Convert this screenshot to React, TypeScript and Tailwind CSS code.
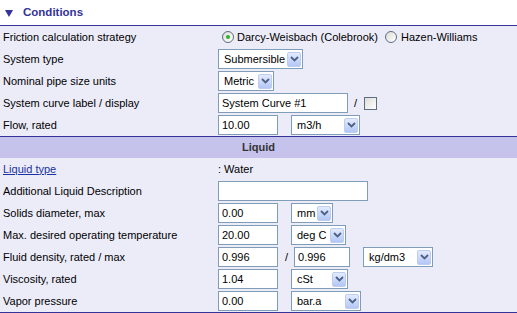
import React from "react";

const Chevron = () => (
  <svg width="9" height="6" viewBox="0 0 9 6">
    <path d="M1 1 L4.5 4.5 L8 1" fill="none" stroke="#4d6185" strokeWidth="1.8" />
  </svg>
);

const Select = ({ value, width }: { value: string; width: string }) => (
  <div className={`flex h-[20px] items-center justify-between border border-[#7f9db9] bg-white ${width}`}>
    <span className="pl-[5px] text-black">{value}</span>
    <div className="mr-[1px] flex h-[15px] w-[14px] items-center justify-center rounded-[2px] border border-[#bdcdf1] bg-gradient-to-b from-[#e3ebfe] to-[#b3c7f5]">
      <Chevron />
    </div>
  </div>
);

const Input = ({ value = "", width }: { value?: string; width: string }) => (
  <div className={`flex h-[20px] items-center border border-[#7f9db9] bg-white pl-[3px] text-black ${width}`}>
    {value}
  </div>
);

const Radio = ({ checked }: { checked?: boolean }) => (
  <div className="flex h-[12px] w-[12px] items-center justify-center rounded-full border border-[#5f6d80] bg-gradient-to-br from-[#dcdcd7] to-white">
    {checked && <div className="h-[4px] w-[4px] rounded-full bg-[#2fb02f]" />}
  </div>
);

const Row = ({ label, children }: { label: React.ReactNode; children?: React.ReactNode }) => (
  <div className="flex h-[22px] items-center">
    <div className="w-[218px] pl-[3px] text-black">{label}</div>
    <div className="flex items-center">{children}</div>
  </div>
);

export default function App() {
  return (
    <div className="h-[313px] w-[517px] overflow-hidden bg-white text-[11px] leading-none" style={{ fontFamily: '"Liberation Sans", Arial, sans-serif' }}>
      {/* Header */}
      <div className="flex h-[25px] items-center pl-[5px]">
        <svg width="8" height="7" viewBox="0 0 8 7" className="mt-[1px]">
          <path d="M0 0 H8 L4 7 Z" fill="#33339a" />
        </svg>
        <span className="ml-[10px] text-[11.5px] font-bold text-[#33339a]">Conditions</span>
      </div>

      <div className="border-t border-b-2 border-[#333399] bg-[#ececf9]">
        <Row label="Friction calculation strategy">
          <div className="ml-[4px] flex items-center">
            <Radio checked />
            <span className="ml-[3px]">Darcy-Weisbach (Colebrook)</span>
            <div className="ml-[7px]">
              <Radio />
            </div>
            <span className="ml-[4px]">Hazen-Williams</span>
          </div>
        </Row>
        <Row label="System type">
          <Select value="Submersible" width="w-[85px]" />
        </Row>
        <Row label="Nominal pipe size units">
          <Select value="Metric" width="w-[56px]" />
        </Row>
        <Row label="System curve label / display">
          <Input value="System Curve #1" width="w-[130px]" />
          <span className="ml-[6px]">/</span>
          <div className="ml-[7px] h-[13px] w-[13px] border border-[#5f6d80] bg-gradient-to-br from-[#dcdcd7] to-white" />
        </Row>
        <Row label="Flow, rated">
          <Input value="10.00" width="w-[60px]" />
          <div className="ml-[13px]">
            <Select value="m3/h" width="w-[69px]" />
          </div>
        </Row>

        {/* Liquid band */}
        <div className="flex h-[22px] items-center justify-center border-t border-[#333399] bg-[#c5c3eb] font-bold text-[#333]">
          Liquid
        </div>

        <Row label={<span className="text-[#1a33a0] underline">Liquid type</span>}>
          <span className="text-black">: Water</span>
        </Row>
        <Row label="Additional Liquid Description">
          <Input width="w-[150px]" />
        </Row>
        <Row label="Solids diameter, max">
          <Input value="0.00" width="w-[60px]" />
          <div className="ml-[13px]">
            <Select value="mm" width="w-[42px]" />
          </div>
        </Row>
        <Row label="Max. desired operating temperature">
          <Input value="20.00" width="w-[60px]" />
          <div className="ml-[13px]">
            <Select value="deg C" width="w-[55px]" />
          </div>
        </Row>
        <Row label="Fluid density, rated / max">
          <Input value="0.996" width="w-[60px]" />
          <span className="ml-[7px]">/</span>
          <div className="ml-[6px]">
            <Input value="0.996" width="w-[56px]" />
          </div>
          <div className="ml-[13px]">
            <Select value="kg/dm3" width="w-[70px]" />
          </div>
        </Row>
        <Row label="Viscosity, rated">
          <Input value="1.04" width="w-[60px]" />
          <div className="ml-[13px]">
            <Select value="cSt" width="w-[57px]" />
          </div>
        </Row>
        <Row label="Vapor pressure">
          <Input value="0.00" width="w-[60px]" />
          <div className="ml-[13px]">
            <Select value="bar.a" width="w-[70px]" />
          </div>
        </Row>
      </div>
    </div>
  );
}
